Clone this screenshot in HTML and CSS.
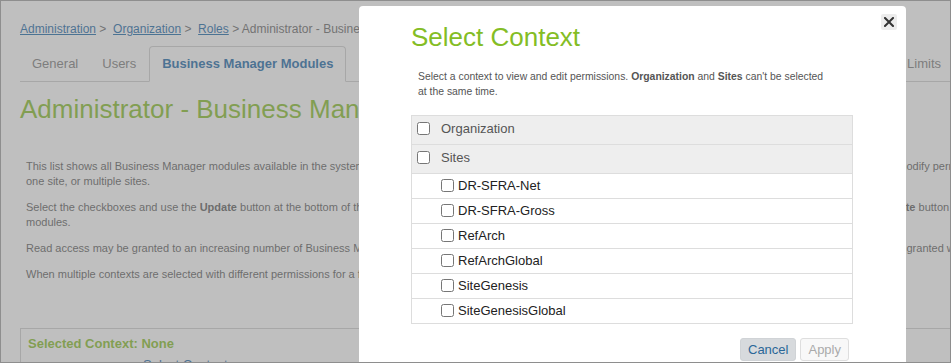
FILE: index.html
```html
<!DOCTYPE html>
<html lang="en">
<head>
  <meta charset="UTF-8" />
  <title>Administrator - Business Manager Modules</title>
  <link rel="stylesheet" href="styles.css">
</head>
<body>
  <div class="page">
    <div class="breadcrumb">
      <a href="#">Administration</a>&nbsp;&gt;&nbsp; <a href="#">Organization</a>&nbsp;&gt;&nbsp; <a href="#">Roles</a> &gt; Administrator - Business Manager Modules
    </div>

    <ul class="tabs">
      <li><a href="#">General</a></li>
      <li><a href="#">Users</a></li>
      <li class="active"><a href="#">Business Manager Modules</a></li>
      <li><a href="#">Functional Permissions</a></li>
      <li class="last"><a href="#">Limits</a></li>
    </ul>

    <h1 class="page-title">Administrator - Business Manager Modules</h1>

    <div class="intro">
      <p>This list shows all Business Manager modules available in the system. Select a context to view the permissions for each module in every context, grant read and write access, and modify permissions for the organization, one site, or multiple sites.</p>
      <p>Select the checkboxes and use the <b>Update</b> button at the bottom of the page to grant access to the chosen contexts. To remove access later, clear the checkboxes and use the <b>Update</b> button to revoke access to the modules.</p>
      <p>Read access may be granted to an increasing number of Business Manager modules, but write access to the modules should be restricted to the users that really need it and is only granted when required.</p>
      <p>When multiple contexts are selected with different permissions for a function, the permission is shown as mixed.</p>
    </div>

    <div class="context-box">
      <div class="context-title">Selected Context: None</div>
      <div class="context-link"><a href="#">Select Context</a></div>
    </div>
  </div>

  <div class="overlay"></div>

  <div class="dialog">
    <button class="dialog-close" title="Close">
      <svg width="10" height="10" viewBox="0 0 10 10">
        <path d="M1 1 L9 9 M9 1 L1 9" stroke="#333" stroke-width="2" stroke-linecap="square" fill="none"/>
      </svg>
    </button>
    <h2 class="dialog-title">Select Context</h2>
    <p class="dialog-text">Select a context to view and edit permissions. <b>Organization</b> and <b>Sites</b> can't be selected at the same time.</p>

    <div class="context-list">
      <label class="ctx-row ctx-top"><input type="checkbox"> Organization</label>
      <label class="ctx-row ctx-top"><input type="checkbox"> Sites</label>
      <label class="ctx-row ctx-site"><input type="checkbox"> DR-SFRA-Net</label>
      <label class="ctx-row ctx-site"><input type="checkbox"> DR-SFRA-Gross</label>
      <label class="ctx-row ctx-site"><input type="checkbox"> RefArch</label>
      <label class="ctx-row ctx-site"><input type="checkbox"> RefArchGlobal</label>
      <label class="ctx-row ctx-site"><input type="checkbox"> SiteGenesis</label>
      <label class="ctx-row ctx-site"><input type="checkbox"> SiteGenesisGlobal</label>
    </div>

    <div class="dialog-buttons">
      <button class="btn btn-cancel">Cancel</button>
      <button class="btn btn-apply" disabled>Apply</button>
    </div>
  </div>

  <div class="frame"></div>
</body>
</html>
```

FILE: styles.css
```css
:root {
  --green: #84bd25;
  --link: #1766a6;
  --text: #5a5a5a;
  --line: #dddddd;
}
html, body {
  margin: 0;
  height: 100%;
  overflow: hidden;
}
body {
  font-family: "Liberation Sans", Arial, sans-serif;
  background: #fff;
  color: var(--text);
}

/* Page behind the dialog */
.page {
  width: 1080px;
  padding: 20px 0 0 20px;
}
.breadcrumb {
  font-size: 12px;
  line-height: 18px;
  color: #666;
}
.breadcrumb a {
  color: var(--link);
}
.tabs {
  list-style: none;
  margin: 8px 0 0 0;
  padding: 0;
  width: 933px;
  display: flex;
  border-bottom: 1px solid #cfcfcf;
}
.tabs li {
  margin-bottom: -1px;
}
.tabs li a {
  display: block;
  padding: 9px 11px;
  line-height: 16px;
  font-size: 13px;
  color: #7a7a7a;
  text-decoration: none;
  border: 1px solid transparent;
  border-radius: 4px 4px 0 0;
}
.tabs li.active {
  margin-left: 1px;
}
.tabs li.active a {
  padding: 9px 12px;
  border-color: #cfcfcf;
  border-bottom-color: #fff;
  background: #fff;
  color: var(--link);
  font-weight: bold;
}
.tabs li.last {
  margin-left: auto;
}
.page-title {
  margin: 10px 0 0;
  font-size: 26px;
  line-height: 34px;
  font-weight: normal;
  color: var(--green);
}
.intro {
  padding: 33px 0 0 6px;
  font-size: 11px;
  line-height: 15px;
}
.intro p {
  margin: 0 0 11px;
}
.context-box {
  margin-top: 46px;
  border: 1px solid #cfcfcf;
  padding: 7px 7px 20px;
}
.context-title {
  font-size: 13px;
  line-height: 16px;
  font-weight: bold;
  color: var(--green);
}
.context-link {
  padding: 5px 0 0 115px;
  font-size: 13px;
}
.context-link a {
  color: var(--link);
}

/* Dialog */
.overlay {
  position: fixed;
  inset: 0;
  background: rgba(128, 128, 128, 0.5);
}
.dialog {
  position: absolute;
  left: 359px;
  top: 6px;
  width: 547px;
  height: 420px;
  box-sizing: border-box;
  padding: 15px 53px 0 52px;
  background: #fff;
  border-radius: 4px;
}
.dialog-close {
  position: absolute;
  top: 8px;
  right: 9px;
  width: 16px;
  height: 16px;
  padding: 0;
  border: none;
  border-radius: 2px;
  background: #ececec;
  display: flex;
  align-items: center;
  justify-content: center;
  cursor: pointer;
}
.dialog-title {
  margin: 0;
  font-size: 26px;
  line-height: 32px;
  font-weight: normal;
  color: var(--green);
}
.dialog-text {
  margin: 16px 0 0;
  padding: 0 25px 0 7px;
  font-size: 10.4px;
  line-height: 15px;
  color: #555;
}
.context-list {
  margin-top: 16px;
  border: 1px solid var(--line);
  border-bottom: none;
}
.ctx-row {
  display: flex;
  align-items: center;
  border-bottom: 1px solid var(--line);
  font-size: 13px;
  cursor: pointer;
}
.ctx-row input {
  width: 13px;
  height: 13px;
  margin: 0;
}
.ctx-top {
  height: 25px;
  padding: 0 0 3px 5px;
  gap: 11px;
  background: #eeeeee;
  color: #555;
}
.ctx-site {
  height: 23px;
  padding: 0 0 1px 29px;
  gap: 4px;
  color: #222;
}
.dialog-buttons {
  display: flex;
  justify-content: flex-end;
  gap: 4px;
  margin-top: 14px;
  padding-right: 4px;
}
.btn {
  height: 23px;
  padding: 0 7px;
  font-family: "Liberation Sans", Arial, sans-serif;
  font-size: 13px;
  border-radius: 3px;
  cursor: pointer;
}
.btn-cancel {
  background: #d7dadd;
  border: 1px solid #d0d3d6;
  color: #2a6798;
}
.btn-apply {
  background: #f8f8f8;
  border: 1px solid #dedede;
  color: #aaa;
  cursor: default;
}

.frame {
  position: fixed;
  inset: 0;
  border: 1px solid #8e8e8e;
  pointer-events: none;
}
```
